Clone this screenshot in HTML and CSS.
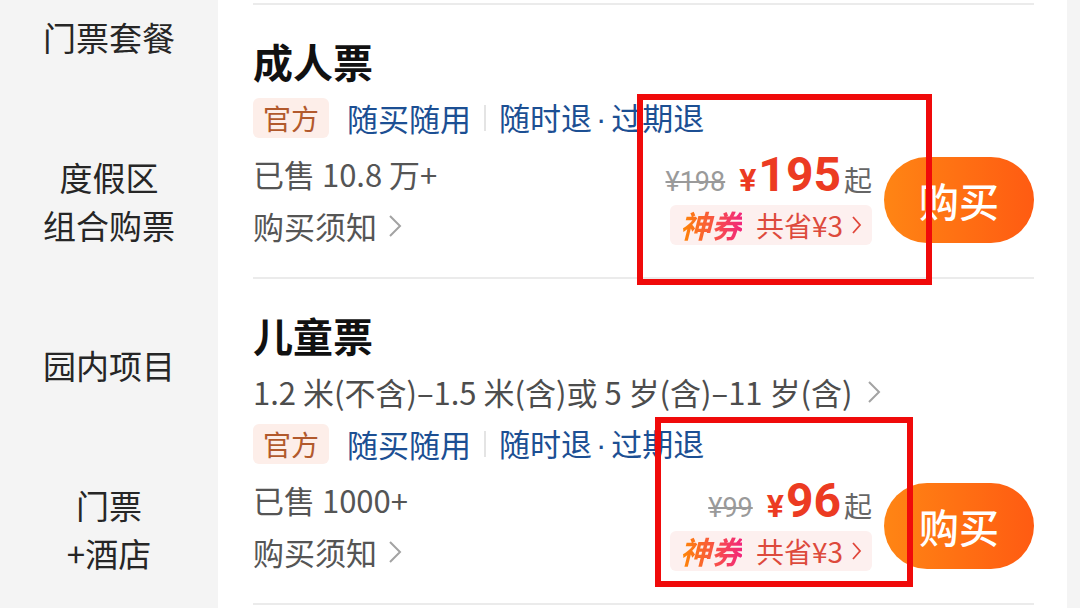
FILE: index.html
```html
<!DOCTYPE html>
<html lang="zh-CN">
<head>
  <meta charset="UTF-8" />
  <meta name="viewport" content="width=device-width, initial-scale=1.0" />
  <title>门票套餐</title>
  <link rel="stylesheet" href="styles.css">
</head>
<body>
  <div class="page">
    <nav class="sidebar">
      <div class="nav-item">门票套餐</div>
      <div class="nav-item">度假区<br>组合购票</div>
      <div class="nav-item">园内项目</div>
      <div class="nav-item">门票<br>+酒店</div>
    </nav>

    <main class="list">
      <section class="ticket">
        <h3 class="ticket-name">成人票</h3>
        <div class="tags">
          <span class="tag-official">官方</span>
          <span class="tag-link">随买随用</span>
          <span class="tag-sep"></span>
          <span class="tag-link">随时退<span class="dot">·</span>过期退</span>
        </div>
        <div class="ticket-bottom">
          <div class="meta">
            <div class="sold">已售 10.8 万+</div>
            <div class="notice">购买须知
              <svg class="chev" width="16" height="26" viewBox="0 0 16 26"><polyline points="3,3 13,13 3,23" fill="none" stroke="#a3a3a3" stroke-width="2"/></svg>
            </div>
          </div>
          <div class="price-box">
            <div class="price-row">
              <span class="price-old">¥198</span>
              <span class="price-yen">¥</span><span class="price-now">195</span><span class="price-from">起</span>
            </div>
            <div class="coupon">
              <span class="coupon-name">神券</span>
              <span class="coupon-save">共省¥3</span>
              <svg class="coupon-chev" width="11" height="20" viewBox="0 0 11 20"><polyline points="2,2 9,10 2,18" fill="none" stroke="#e0463a" stroke-width="1.8"/></svg>
            </div>
          </div>
          <button class="buy">购买</button>
        </div>
      </section>

      <section class="ticket">
        <h3 class="ticket-name">儿童票</h3>
        <div class="spec">1.2 米(不含)–1.5 米(含)或 5 岁(含)–11 岁(含)
          <svg class="chev" width="16" height="26" viewBox="0 0 16 26"><polyline points="3,3 13,13 3,23" fill="none" stroke="#a3a3a3" stroke-width="2"/></svg>
        </div>
        <div class="tags">
          <span class="tag-official">官方</span>
          <span class="tag-link">随买随用</span>
          <span class="tag-sep"></span>
          <span class="tag-link">随时退<span class="dot">·</span>过期退</span>
        </div>
        <div class="ticket-bottom">
          <div class="meta">
            <div class="sold">已售 1000+</div>
            <div class="notice">购买须知
              <svg class="chev" width="16" height="26" viewBox="0 0 16 26"><polyline points="3,3 13,13 3,23" fill="none" stroke="#a3a3a3" stroke-width="2"/></svg>
            </div>
          </div>
          <div class="price-box">
            <div class="price-row">
              <span class="price-old">¥99</span>
              <span class="price-yen">¥</span><span class="price-now">96</span><span class="price-from">起</span>
            </div>
            <div class="coupon">
              <span class="coupon-name">神券</span>
              <span class="coupon-save">共省¥3</span>
              <svg class="coupon-chev" width="11" height="20" viewBox="0 0 11 20"><polyline points="2,2 9,10 2,18" fill="none" stroke="#e0463a" stroke-width="1.8"/></svg>
            </div>
          </div>
          <button class="buy">购买</button>
        </div>
      </section>

      <!-- red highlight frames drawn over the price areas -->
      <div class="mark mark-adult"></div>
      <div class="mark mark-child"></div>
    </main>

    <div class="edge"></div>
  </div>
</body>
</html>
```

FILE: styles.css
```css
body {
  margin: 0;
  font-family: "Noto Sans CJK SC", "Noto Sans", sans-serif;
  background-color: #f4f4f4;
  overflow: hidden;
}
.page {
  display: flex;
  height: 608px;
}
.sidebar {
  width: 218px;
  flex-shrink: 0;
  margin-top: -45px;
  background-color: #f4f4f4;
}
.nav-item {
  height: 164px;
  display: flex;
  align-items: center;
  justify-content: center;
  text-align: center;
  font-size: 33px;
  line-height: 48px;
  color: #262626;
}
.list {
  position: relative;
  width: 849px;
  flex-shrink: 0;
  background-color: #fff;
  padding: 3px 33px 0 35px;
  box-sizing: border-box;
}
.edge {
  flex: 1;
  background-color: #f4f4f4;
}
.ticket {
  border-top: 2px solid #ebebeb;
  padding: 29px 0 25px;
}
.ticket:last-of-type {
  border-bottom: 2px solid #ebebeb;
}
.ticket-name {
  margin: 0;
  font-size: 40px;
  line-height: 54px;
  font-weight: 700;
  color: #111;
}
.spec {
  margin-top: 8px;
  font-size: 31px;
  line-height: 44px;
  color: #4d4d4d;
  display: flex;
  align-items: center;
  gap: 14px;
}
.tags {
  margin-top: 10px;
  display: flex;
  align-items: center;
  height: 40px;
}
.tag-official {
  background-color: #fdeee9;
  color: #b2592c;
  font-size: 28px;
  line-height: 40px;
  padding: 0 10px;
  border-radius: 6px;
  margin-right: 18px;
}
.tag-link {
  color: #1c4f93;
  font-size: 31px;
  line-height: 40px;
}
.dot {
  font-family: "Liberation Sans", sans-serif;
  margin: 0 5px 0 4px;
}
.tag-sep {
  width: 2px;
  height: 26px;
  background-color: #e4e4e4;
  margin: 0 13px;
}
.ticket-bottom {
  margin-top: 10px;
  display: flex;
  align-items: center;
}
.meta {
  flex: 1;
  color: #555;
  font-size: 31px;
  line-height: 52px;
}
.notice {
  display: flex;
  align-items: center;
  gap: 10px;
}
.price-box {
  display: flex;
  flex-direction: column;
  align-items: flex-end;
  gap: 7px;
  margin: 0 12px 4px 0;
}
.price-row {
  display: flex;
  align-items: baseline;
  line-height: 1;
  font-family: Roboto, "Noto Sans CJK SC", sans-serif;
}
.price-old {
  font-size: 27px;
  color: #9a9a9a;
  text-decoration: line-through;
  margin-right: 14px;
}
.price-yen {
  font-size: 32px;
  font-weight: 700;
  color: #ec3b22;
  margin-right: 2px;
}
.price-now {
  font-size: 48px;
  line-height: 46px;
  font-weight: 700;
  color: #ec3b22;
}
.price-from {
  font-family: "Noto Sans CJK SC", sans-serif;
  font-size: 28px;
  color: #666;
  margin-left: 3px;
}
.coupon {
  display: flex;
  align-items: center;
  height: 40px;
  padding: 0 10px;
  background-color: #fdf0ef;
  border-radius: 6px;
}
.coupon-name {
  font-size: 31px;
  font-weight: 700;
  font-style: italic;
  background: linear-gradient(90deg, #ff8a00, #f2267c);
  -webkit-background-clip: text;
  background-clip: text;
  color: transparent;
  margin-right: 14px;
}
.coupon-save {
  font-size: 28px;
  color: #dd4a3c;
  margin-right: 8px;
}
.buy {
  width: 150px;
  height: 86px;
  border: none;
  border-radius: 43px;
  background: linear-gradient(90deg, #ff8514, #ff5b12);
  color: #fff;
  font-family: inherit;
  font-size: 40px;
  font-weight: 500;
  padding: 0;
}
.mark {
  position: absolute;
  border: 6px solid #f00a0a;
  z-index: 2;
}
.mark-adult {
  left: 419px;
  top: 94px;
  width: 283px;
  height: 179px;
}
.mark-child {
  left: 437px;
  top: 417px;
  width: 246px;
  height: 158px;
}
```
